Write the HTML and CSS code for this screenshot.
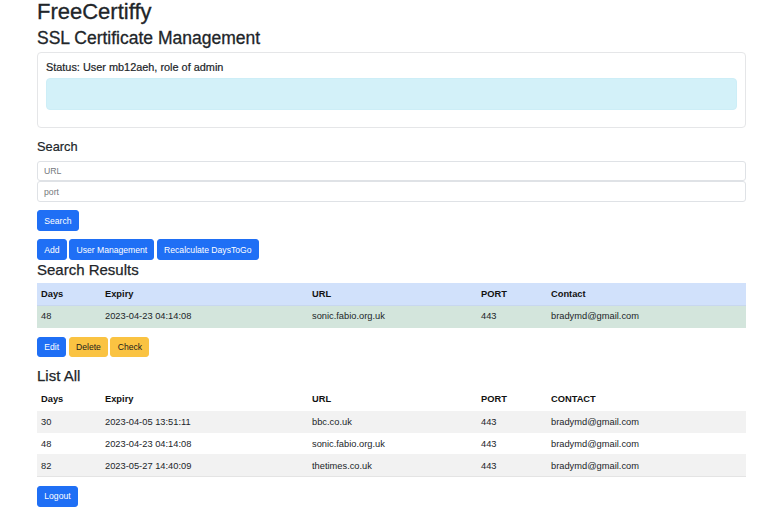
FILE: index.html
```html
<!DOCTYPE html>
<html lang="en">
<head>
<meta charset="utf-8">
<title>FreeCertiffy</title>
<link rel="stylesheet" href="styles.css">
</head>
<body>
<div class="container">
  <h1 class="title">FreeCertiffy</h1>
  <h2 class="subtitle">SSL Certificate Management</h2>
  <div class="card">
    <div class="status">Status: User mb12aeh, role of admin</div>
    <div class="alert"></div>
  </div>
  <h4 class="section-small">Search</h4>
  <div class="inputs">
    <input class="field" type="text" placeholder="URL">
    <input class="field" type="text" placeholder="port">
  </div>
  <div class="btn-row first">
    <button class="btn primary">Search</button>
  </div>
  <div class="btn-row second">
    <button class="btn primary">Add</button>
    <button class="btn primary">User Management</button>
    <button class="btn primary">Recalculate DaysToGo</button>
  </div>
  <h3 class="section results-title">Search Results</h3>
  <table class="grid">
    <thead>
      <tr class="head-blue">
        <th class="c-days">Days</th><th class="c-exp">Expiry</th><th class="c-url">URL</th><th class="c-port">PORT</th><th class="c-contact">Contact</th>
      </tr>
    </thead>
    <tbody>
      <tr class="row-green">
        <td>48</td><td>2023-04-23 04:14:08</td><td>sonic.fabio.org.uk</td><td>443</td><td>bradymd@gmail.com</td>
      </tr>
    </tbody>
  </table>
  <div class="btn-row third">
    <button class="btn primary">Edit</button>
    <button class="btn warning">Delete</button>
    <button class="btn warning">Check</button>
  </div>
  <h3 class="section list-title">List All</h3>
  <table class="grid striped">
    <thead>
      <tr>
        <th class="c-days">Days</th><th class="c-exp">Expiry</th><th class="c-url">URL</th><th class="c-port">PORT</th><th class="c-contact">CONTACT</th>
      </tr>
    </thead>
    <tbody>
      <tr><td>30</td><td>2023-04-05 13:51:11</td><td>bbc.co.uk</td><td>443</td><td>bradymd@gmail.com</td></tr>
      <tr><td>48</td><td>2023-04-23 04:14:08</td><td>sonic.fabio.org.uk</td><td>443</td><td>bradymd@gmail.com</td></tr>
      <tr><td>82</td><td>2023-05-27 14:40:09</td><td>thetimes.co.uk</td><td>443</td><td>bradymd@gmail.com</td></tr>
    </tbody>
  </table>
  <div class="btn-row fourth">
    <button class="btn primary">Logout</button>
  </div>
</div>
</body>
</html>
```

FILE: styles.css
```css
* { box-sizing: border-box; }
html, body { margin: 0; padding: 0; background: #fff; }
body {
  font-family: "Liberation Sans", Arial, Helvetica, sans-serif;
  color: #212529;
  font-size: 9.2px;
}
.container {
  width: 709px;
  margin-left: 37px;
}
.title {
  font-size: 22px;
  line-height: 24.6px;
  font-weight: 400;
  margin: 0;
  -webkit-text-stroke: 0.3px #212529;
}
.subtitle {
  font-size: 17.5px;
  line-height: 21px;
  font-weight: 400;
  margin: 3.9px 0 0 0;
  -webkit-text-stroke: 0.3px #212529;
}
.card {
  margin-top: 2.5px;
  border: 1px solid #e5e6e8;
  border-radius: 4px;
  padding: 8px 8px 17px 8px;
  height: 76px;
}
.status {
  font-size: 10.9px;
  line-height: 13px;
  font-weight: 400;
  margin-top: 0.4px;
  -webkit-text-stroke: 0.2px #212529;
}
.alert {
  margin-top: 3.6px;
  height: 32px;
  background: #d3f1f9;
  border: 1px solid #cdeef7;
  border-radius: 4px;
}
.section-small {
  font-size: 12.8px;
  line-height: 16px;
  font-weight: 400;
  margin: 11.3px 0 0 0;
  -webkit-text-stroke: 0.2px #212529;
}
.inputs {
  margin-top: 5.7px;
  display: flex;
  flex-direction: column;
}
.field {
  display: block;
  width: 100%;
  height: 20.5px;
  border: 1px solid #dfe2e6;
  border-radius: 3px;
  padding: 0 6px;
  font-family: "Liberation Sans", Arial, Helvetica, sans-serif;
  font-size: 8.7px;
  color: #212529;
  background: #fff;
  outline: none;
}
.field::placeholder { color: #75797d; }
.btn-row {
  display: flex;
  gap: 2.3px;
}
.btn-row.first { margin-top: 8.5px; }
.btn-row.second { margin-top: 8.5px; }
.btn-row.third { margin-top: 9.4px; }
.btn-row.fourth { margin-top: 9px; }
.btn {
  height: 20.4px;
  padding: 0 6.3px;
  border-radius: 3px;
  font-family: "Liberation Sans", Arial, Helvetica, sans-serif;
  font-size: 8.6px;
  line-height: 18px;
  border: 1px solid transparent;
  cursor: pointer;
}
.btn.primary { background: #1f6ff5; border-color: #1f6ff5; color: #fff; }
.btn.warning { background: #fac342; border-color: #fac342; color: #1b1b1b; }
.section {
  font-size: 15px;
  line-height: 18px;
  font-weight: 400;
  -webkit-text-stroke: 0.25px #212529;
}
.results-title { margin: 1.4px 0 0 0; }
.list-title { margin: 9.8px 0 0 0; }
.grid {
  width: 100%;
  border-collapse: collapse;
  table-layout: fixed;
}
.results-title + .grid { margin-top: 3.9px; }
.list-title + .grid { margin-top: 3.5px; }
.grid th, .grid td {
  text-align: left;
  padding: 0 4px;
  height: 22px;
  font-size: 9.3px;
  border-bottom: 1px solid #e2e4e6;
}
.grid th { font-weight: 700; color: #111; }
.c-days { width: 64px; }
.c-exp { width: 207px; }
.c-url { width: 169px; }
.c-port { width: 70px; }
.c-contact { width: auto; }
.head-blue th { background: #d1e1fb; border-bottom-color: #c8d7ef; }
.row-green td { background: #d3e5dc; border-bottom-color: #d3e5dc; }
.striped th { border-bottom-color: #fff; }
.striped tbody tr:nth-child(odd) td { background: #f2f2f2; }
.striped tbody tr td { border-bottom-color: #f2f2f2; }
.striped tbody tr:last-child td { border-bottom-color: #e4e4e4; }
```
